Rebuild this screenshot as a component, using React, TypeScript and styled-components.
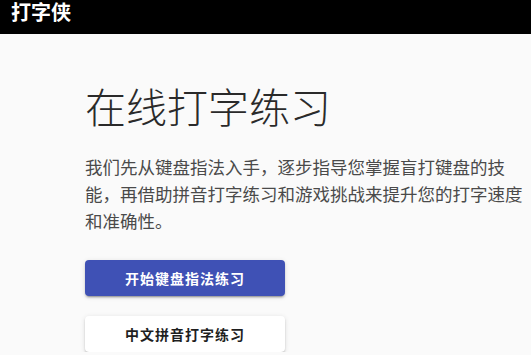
import React from 'react';
import styled, { createGlobalStyle } from 'styled-components';

const GlobalStyle = createGlobalStyle`
  html, body {
    margin: 0;
    padding: 0;
    background: #fafafa;
    font-family: "Noto Sans CJK SC", "Noto Sans", Roboto, sans-serif;
  }
`;

const TopBar = styled.header`
  height: 34px;
  background: #000;
  display: flex;
  align-items: flex-start;
  padding: 0 11px;
`;

const Brand = styled.div`
  color: #fff;
  font-size: 20px;
  font-weight: 700;
  line-height: 24px;
`;

const Hero = styled.main`
  display: flex;
  flex-direction: column;
  align-items: flex-start;
  padding: 46px 0 0 85px;
  width: 445px;
`;

const Title = styled.h1`
  margin: 0;
  font-size: 41px;
  font-weight: 300;
  line-height: 50px;
  color: #2a2a2a;
`;

const Intro = styled.p`
  margin: 23px 0 0;
  font-size: 17.5px;
  line-height: 27px;
  color: #4a4a4a;
`;

const ActionButton = styled.button<{ $primary?: boolean }>`
  width: 200px;
  height: 36px;
  margin-top: ${(p) => (p.$primary ? '26px' : '20px')};
  border: none;
  border-radius: 4px;
  font-family: inherit;
  font-size: 14px;
  font-weight: 700;
  letter-spacing: 1px;
  cursor: pointer;
  background: ${(p) => (p.$primary ? '#3f51b5' : '#fff')};
  color: ${(p) => (p.$primary ? '#fff' : '#1f1f1f')};
  box-shadow: 0 3px 1px -2px rgba(0, 0, 0, 0.2), 0 2px 2px 0 rgba(0, 0, 0, 0.14),
    0 1px 5px 0 rgba(0, 0, 0, 0.12);
`;

export default function App() {
  return (
    <>
      <GlobalStyle />
      <TopBar>
        <Brand>打字侠</Brand>
      </TopBar>
      <Hero>
        <Title>在线打字练习</Title>
        <Intro>
          我们先从键盘指法入手，逐步指导您掌握盲打键盘的技能，再借助拼音打字练习和游戏挑战来提升您的打字速度和准确性。
        </Intro>
        <ActionButton $primary>开始键盘指法练习</ActionButton>
        <ActionButton>中文拼音打字练习</ActionButton>
      </Hero>
    </>
  );
}
